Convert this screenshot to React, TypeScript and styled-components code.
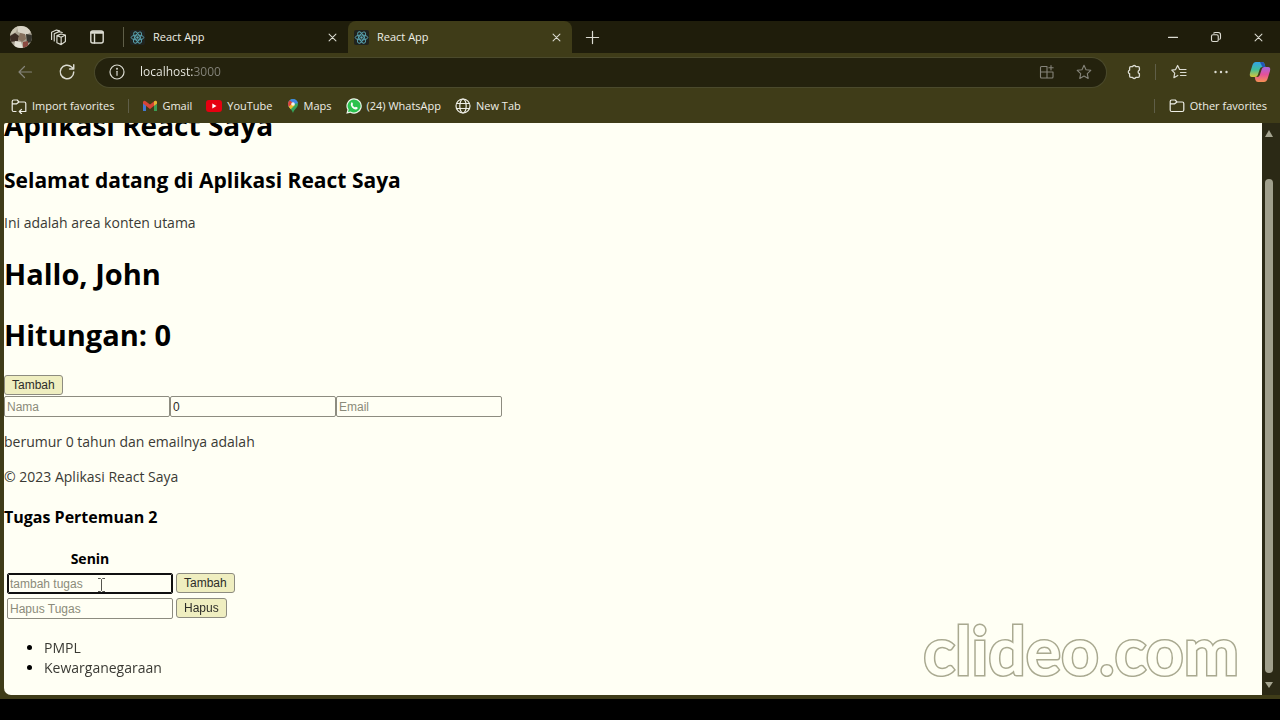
import React from "react";
import styled, { createGlobalStyle } from "styled-components";

const ui = '"Open Sans", "Noto Sans", sans-serif';

const color = {
  titleBar: "#1f1d0b",
  toolBar: "#3f3c18",
  field: "#24220d",
  chromeText: "#eeeee6",
  muted: "#85847a",
  page: "#fffff4",
  text: "#3a3a34",
  border: "#8d8c80",
};

const Global = createGlobalStyle`
  *, *::before, *::after { box-sizing: border-box; }
  body { margin: 0; background: #000; font-family: ${ui}; }
  button, input { font: inherit; margin: 0; }
`;

const Screen = styled.div`
  min-height: 100vh;
  display: flex;
  flex-direction: column;
  padding: 21px 0;
  background: #000;
`;

const Browser = styled.div`
  flex: 1;
  display: flex;
  flex-direction: column;
  background: ${color.toolBar};
  color: ${color.chromeText};
  font-size: 11px;
  line-height: 16px;
`;

const TitleBar = styled.div`
  display: flex;
  height: 32px;
  background: ${color.titleBar};
`;

const IconButton = styled.button<{ $w?: number; $dim?: boolean }>`
  width: ${(p) => p.$w ?? 40}px;
  flex: none;
  align-self: stretch;
  display: flex;
  align-items: center;
  justify-content: center;
  padding: 0;
  border: 0;
  background: none;
  color: ${(p) => (p.$dim ? color.muted : "#dcdcd2")};
`;

const WindowTools = styled.div`
  display: flex;
  padding-right: 4px;
`;

const Tab = styled.div<{ $active?: boolean }>`
  width: 224px;
  display: flex;
  align-items: center;
  padding: 0 3px 0 6px;
  border-radius: 8px 8px 0 0;
  background: ${(p) => (p.$active ? color.toolBar : "transparent")};
`;

const TabLink = styled.button`
  flex: 1;
  display: flex;
  align-items: center;
  gap: 8px;
  padding: 0;
  border: 0;
  background: none;
  color: inherit;
  text-align: left;
`;

const Divider = styled.span<{ $h: number }>`
  width: 1px;
  height: ${(p) => p.$h}px;
  flex: none;
  align-self: center;
  background: #5f5e48;
`;

const Spacer = styled.div`
  flex: 1;
`;

const ToolBar = styled.div`
  display: flex;
  height: 38px;
  padding-left: 4px;
`;

const AddressBar = styled.form`
  flex: 1;
  display: flex;
  align-items: center;
  height: 29px;
  align-self: center;
  margin: 0 6px 0 7px;
  padding: 0 4px 0 3px;
  border-radius: 15px;
  background: ${color.field};
  box-shadow: 0 0 0 1px #4b4a2c;
`;

const Address = styled.input`
  flex: 1;
  min-width: 0;
  padding: 0 0 0 5px;
  border: 0;
  outline: 0;
  font-size: 12px;
  background: linear-gradient(90deg, #f2f2ea 59px, ${color.muted} 59px);
  background-clip: text;
  -webkit-background-clip: text;
  -webkit-text-fill-color: transparent;
`;

const Bookmarks = styled.nav`
  display: flex;
  align-items: center;
  height: 31px;
  padding: 0 13px 2px 11px;
  gap: 14px;
`;

const Bookmark = styled.a`
  display: flex;
  align-items: center;
  gap: 5px;
  color: inherit;
  text-decoration: none;
  white-space: nowrap;
`;

const Viewport = styled.div`
  flex: 1;
  display: flex;
  padding: 1px 0 4px 4px;
  overflow: hidden;
`;

const Page = styled.main`
  flex: 1;
  position: relative;
  overflow: hidden;
  background: ${color.page};
  color: ${color.text};
  border-radius: 2px 0 0 7px;
  font-size: 14px;
  line-height: 20px;
`;

const ScrollBar = styled.div`
  width: 18px;
  display: flex;
  flex-direction: column;
  align-items: center;
  padding-right: 4px;
  background: #2b2915;
`;

const ScrollThumb = styled.div`
  flex: 1;
  width: 8px;
  margin: 38px 0 4px;
  border-radius: 4px;
  background: #a09f8c;
`;

const H1 = styled.h1`
  margin: 21px 0 0;
  font-size: 29px;
  line-height: 40px;
  color: #000;
`;

const SiteTitle = styled(H1)`
  margin-top: -18px;
  font-size: 28px;
`;

const H2 = styled.h2`
  margin: 20px 0 0;
  font-size: 21px;
  line-height: 30px;
  color: #000;
`;

const H3 = styled.h3`
  margin: 19px 0 17px;
  font-size: 16px;
  line-height: 22px;
  color: #000;
`;

const P = styled.p`
  margin: 15px 0 0;
`;

const Intro = styled(P)`
  margin-top: 18px;
`;

const Counter = styled.div`
  display: flex;
  margin-top: 20px;
`;

const FieldRow = styled.div`
  display: flex;
  margin-top: 1px;
`;

const PushButton = styled.button`
  display: block;
  height: 20px;
  padding: 0 7px;
  border: 1px solid ${color.border};
  border-radius: 3px;
  background: #efeec0;
  color: #2c2c28;
  font: 12px/16px "Liberation Sans", Arial, sans-serif;
`;

const Field = styled.input`
  display: block;
  width: 166px;
  height: 21px;
  padding: 0 2px;
  border: 1px solid ${color.border};
  border-radius: 2px;
  background: ${color.page};
  color: #2c2c28;
  font: 12px/16px "Liberation Sans", Arial, sans-serif;
  &::placeholder { color: #8b8b7a; opacity: 1; }
  &:focus { outline: 1px solid #101010; border-color: #101010; outline-offset: -2px; }
`;

const TaskTable = styled.table`
  border-spacing: 3px 4px;
  margin-bottom: 15px;
  th, td { padding: 0; vertical-align: top; }
  th { height: 20px; color: #000; }
`;

const TaskList = styled.ul`
  margin: 0 0 17px;
  padding-left: 40px;
  li::marker { color: #000; }
`;

const Pointer = styled.svg`
  position: absolute;
  left: 93px;
  top: 454px;
`;

const Watermark = styled.div`
  position: absolute;
  right: 23px;
  bottom: 8px;
  font: 700 66px/74px Lato, sans-serif;
  color: ${color.page};
  -webkit-text-stroke: 3px #a9a990;
  paint-order: stroke fill;
`;

const Line = ({ size = 16, w = 1.2, children }: { size?: number; w?: number; children: React.ReactNode }) => (
  <svg width={size} height={size} viewBox="0 0 16 16" fill="none" stroke="currentColor" strokeWidth={w} strokeLinecap="round" strokeLinejoin="round" aria-hidden="true">
    {children}
  </svg>
);

const ReactLogo = () => (
  <svg width="15" height="15" viewBox="0 0 15 15" aria-hidden="true">
    <rect width="15" height="15" rx="2" fill="#20231f" />
    <g fill="none" stroke="#5ba7b5" strokeWidth="0.9">
      <ellipse cx="7.5" cy="7.5" rx="6.3" ry="2.5" />
      <ellipse cx="7.5" cy="7.5" rx="6.3" ry="2.5" transform="rotate(60 7.5 7.5)" />
      <ellipse cx="7.5" cy="7.5" rx="6.3" ry="2.5" transform="rotate(120 7.5 7.5)" />
    </g>
    <circle cx="7.5" cy="7.5" r="1.2" fill="#5ba7b5" />
  </svg>
);

const Avatar = () => (
  <svg width="22" height="22" viewBox="0 0 22 22" aria-hidden="true">
    <defs><clipPath id="face"><circle cx="11" cy="11" r="11" /></clipPath></defs>
    <g clipPath="url(#face)">
      <rect width="22" height="22" fill="#a9a292" />
      <path d="M0 0h8l-2 6-6 3z" fill="#c9c4b2" />
      <path d="M7 0h11l3 6-5 3-8-3z" fill="#d8d3c5" />
      <path d="M0 10l5-3 4 3-1 5-8 1z" fill="#3b2c24" />
      <path d="M10 7l5 1 1 5-4 3-4-3z" fill="#85705d" />
      <path d="M16 8l6 1v7l-5 1z" fill="#37362e" />
      <path d="M5 15l6 1 2 6H4z" fill="#e2dfd4" />
      <path d="M13 16l5-1v5l-5 2z" fill="#8a4940" />
    </g>
  </svg>
);

const Workspaces = () => (
  <Line size={17} w={1.1}>
    <path d="M6.500 6.200l4-1.500 4 1v6l-4 3-4-1.700zM6.500 6.200l4 1.500 4-2M10.500 7.700v7" />
    <path d="M4 11.300V4.500l4.500-2 3 .8M1.500 9.800V3l4.500-2 3 .8" />
  </Line>
);

const TabActions = () => (
  <Line w={1.4}>
    <rect x="1.8" y="2" width="12.4" height="12" rx="2" />
    <path d="M2.500 3.500h11" strokeWidth="2.400" />
    <path d="M5.500 5v9" />
  </Line>
);

const Close = () => <Line size={11} w={1.5}><path d="M3 3l10 10M13 3L3 13" /></Line>;
const Plus = () => <Line size={15} w={1.3}><path d="M8 1.5v13M1.5 8h13" /></Line>;
const Minimize = () => <Line size={12} w={1.5}><path d="M2 8.5h12" /></Line>;
const Restore = () => (
  <Line size={12} w={1.5}>
    <rect x="2" y="5" width="9" height="9" rx="2" />
    <path d="M5 2.8Q5.500 2 7 2h4q3 0 3 3v4q0 1.500-1 2" />
  </Line>
);
const Back = () => <Line><path d="M14.500 8H2M7.500 2.500L2 8l5.500 5.500" /></Line>;
const Refresh = () => <Line size={18} w={1.3}><path d="M14 8a6 6 0 1 1-1.900-4.400L14 5.300M14 1.600v3.700h-3.700" /></Line>;
const Info = () => (
  <Line w={1.200}>
    <circle cx="8" cy="8" r="7" />
    <path d="M8 7.300v4" />
    <circle cx="8" cy="4.800" r="0.400" fill="currentColor" />
  </Line>
);
const AppInstall = () => (
  <Line w={1.100}>
    <path d="M8 2.500H2.500q-1 0-1 1v9.500q0 1 1 1H13q1 0 1-1V8H1.500M8 2.500V14M12 1.500v4.500M9.800 3.700h4.400" />
  </Line>
);
const starPath = "M8 1.300l2 4.400 4.800.6-3.500 3.300.9 4.800L8 12.100l-4.200 2.300.9-4.800L1.200 6.300 6 5.700z";
const Star = () => <Line w={1.100}><path d={starPath} /></Line>;
const Puzzle = () => (
  <Line w={1.300}>
    <path d="M4.800 2.700h1.700a1.800 1.800 0 0 1 3.400 0h2.300q1.200 0 1.200 1.200v2.200a1.900 1.900 0 0 0 0 3.600v2.400q0 1.200-1.200 1.200H9.900a1.800 1.800 0 0 1-3.400 0H4.800q-1.200 0-1.200-1.200V9.700a1.900 1.900 0 0 1 0-3.600V3.900q0-1.200 1.200-1.200z" />
  </Line>
);
const Favorites = () => (
  <Line w={1.200}>
    <path d="M8.500 5.300L6.600 1.500 4.600 5.600.8 6.200l2.900 2.900-.8 4.600 3.900-2.200M8.500 5.500H15M9.500 8.500H15M9.500 11.500H15" />
  </Line>
);
const Dots = () => (
  <Line><g fill="currentColor" stroke="none"><circle cx="2.500" cy="8" r="1.200" /><circle cx="8" cy="8" r="1.200" /><circle cx="13.500" cy="8" r="1.200" /></g></Line>
);

const Copilot = () => (
  <svg width="22" height="22" viewBox="0 0 22 22" aria-hidden="true">
    <defs>
      <linearGradient id="coolSide" x1="0" y1="0" x2="0" y2="1">
        <stop offset="0" stopColor="#31a3e8" /><stop offset="0.500" stopColor="#41bd9a" /><stop offset="1" stopColor="#d6c63a" />
      </linearGradient>
      <linearGradient id="warmSide" x1="0" y1="0" x2="0" y2="1">
        <stop offset="0" stopColor="#a766dd" /><stop offset="0.500" stopColor="#e4509a" /><stop offset="1" stopColor="#f79153" />
      </linearGradient>
    </defs>
    <path d="M7 1h6q2 0 2.600 2l.8 3h-3q-2 0-2.600 2l-2 6q-.6 2-2.600 2H3q-3 0-2-4l2.500-8Q4.500 1 7 1z" fill="url(#coolSide)" />
    <path d="M11 1h2q2 0 2.600 2l.8 3h-3z" fill="#2456b5" />
    <path d="M15 21H9q-2 0-2.600-2l-.6-3h2.400q2 0 2.600-2l2-6q.6-2 2.600-2H19q3 0 2 4l-2.500 8q-1 3-3.500 3z" fill="url(#warmSide)" />
  </svg>
);

const folder = "M1.200 12V3.500q0-1.500 1.500-1.500h3.500L8 4h5.300q1.500 0 1.500 1.500V12q0 1.500-1.500 1.500H2.700Q1.200 13.500 1.200 12zM1.500 5.800h4.200L8 4";
const Folder = () => <Line><path d={folder} /></Line>;
const ImportIcon = () => (
  <Line>
    <path d="M5 13.500H2.700q-1.500 0-1.500-1.500V3.500Q1.200 2 2.700 2h3.500L8 4h5.300q1.500 0 1.500 1.500V11M1.500 5.800h4.200L8 4M14.800 11v2.500H8.500M10.500 11.300l-2.200 2.200 2.200 2.200" />
  </Line>
);
const Gmail = () => (
  <svg width="14" height="12" viewBox="0 0 14 12" aria-hidden="true">
    <path d="M0 2v9h3V5z" fill="#4378d0" /><path d="M14 2v9h-3V5z" fill="#3c9b53" />
    <path d="M0 2q1-2 3-.5l4 3 4-3Q13 0 14 2v1.500L7 9 0 3.500z" fill="#d94436" />
    <path d="M11 1.500Q13 0 14 2v1.500l-3 2.300z" fill="#e2b733" />
  </svg>
);
const YouTube = () => (
  <svg width="16" height="12" viewBox="0 0 16 12" aria-hidden="true">
    <rect width="16" height="12" rx="3" fill="#e60010" /><path d="M6.300 3.500v5l4.200-2.500z" fill="#fff" />
  </svg>
);
const Maps = () => (
  <svg width="12" height="16" viewBox="0 0 12 16" aria-hidden="true">
    <defs><clipPath id="pin"><path d="M6 1a5 5 0 0 1 5 5c0 4-4 5-5 9-1-4-5-5-5-9a5 5 0 0 1 5-5z" /></clipPath></defs>
    <g clipPath="url(#pin)">
      <rect width="12" height="16" fill="#36a35a" />
      <path d="M0 0h12v5L6 6 0 12z" fill="#4285e4" />
      <path d="M0 0l6 5-5 6z" fill="#dc4437" />
      <path d="M0 10l6-5 2 2-6 6z" fill="#eebc2e" />
    </g>
    <circle cx="6" cy="6" r="1.800" fill="#f3f3ee" />
  </svg>
);
const WhatsApp = () => (
  <svg width="16" height="16" viewBox="0 0 16 16" aria-hidden="true">
    <path d="M8 .3a7.700 7.700 0 1 1-3.700 14.400L.3 15.700l1.100-3.900A7.700 7.700 0 0 1 8 .3z" fill="#eef5ec" />
    <path d="M8 1.500a6.500 6.500 0 1 1-3.400 12L2 14.100l.7-2.500A6.500 6.500 0 0 1 8 1.500z" fill="#2bc24e" />
    <path d="M5.300 4.500q.7-.5 1.200.3l.5 1.200q.1.400-.6 1.100.9 1.700 2.600 2.500l.8-.9 1.800.9q.4 1.800-1.600 2Q8 11.800 6 9.500 3.800 7 5.300 4.500z" fill="#fff" />
  </svg>
);
const Globe = () => (
  <Line w={1.200}>
    <circle cx="8" cy="8" r="7" /><ellipse cx="8" cy="8" rx="3.200" ry="7" /><path d="M1.700 5.500h12.600M1.700 10.500h12.600" />
  </Line>
);

const Arrow = ({ down }: { down?: boolean }) => (
  <svg width="8" height="18" viewBox="0 0 8 18" aria-hidden="true">
    <path d={down ? "M0 5h8l-4 6z" : "M0 14h8L4 7z"} fill="#a5a490" />
  </svg>
);

const tabs = [{ title: "React App", active: false }, { title: "React App", active: true }];
const bookmarks = [
  { label: "Gmail", icon: <Gmail /> },
  { label: "YouTube", icon: <YouTube /> },
  { label: "Maps", icon: <Maps /> },
  { label: "(24) WhatsApp", icon: <WhatsApp /> },
  { label: "New Tab", icon: <Globe /> },
];
const tasks = ["PMPL", "Kewarganegaraan"];

export default function App() {
  return (
    <Screen>
      <Global />
      <Browser>
        <TitleBar>
          <WindowTools>
            <IconButton $w={41} aria-label="Profile"><Avatar /></IconButton>
            <IconButton $w={34} aria-label="Workspaces"><Workspaces /></IconButton>
            <IconButton $w={44} aria-label="Tab actions"><TabActions /></IconButton>
          </WindowTools>
          <Divider $h={20} />
          {tabs.map((t, i) => (
            <Tab key={i} $active={t.active}>
              <TabLink><ReactLogo />{t.title}</TabLink>
              <IconButton $w={26} aria-label="Close tab"><Close /></IconButton>
            </Tab>
          ))}
          <IconButton aria-label="New tab"><Plus /></IconButton>
          <Spacer />
          <IconButton $w={43} aria-label="Minimize"><Minimize /></IconButton>
          <IconButton $w={43} aria-label="Restore"><Restore /></IconButton>
          <IconButton $w={43} aria-label="Close"><Close /></IconButton>
        </TitleBar>
        <ToolBar>
          <IconButton $w={42} $dim aria-label="Back"><Back /></IconButton>
          <IconButton $w={42} aria-label="Refresh"><Refresh /></IconButton>
          <AddressBar>
            <IconButton $w={37} type="button" aria-label="Site information"><Info /></IconButton>
            <Address aria-label="Address" defaultValue="localhost:3000" />
            <IconButton $w={37} $dim type="button" aria-label="Install app"><AppInstall /></IconButton>
            <IconButton $w={37} $dim type="button" aria-label="Add to favorites"><Star /></IconButton>
          </AddressBar>
          <IconButton $w={43} aria-label="Extensions"><Puzzle /></IconButton>
          <Divider $h={16} />
          <IconButton $w={46} aria-label="Favorites"><Favorites /></IconButton>
          <IconButton $w={38} aria-label="Settings"><Dots /></IconButton>
          <IconButton aria-label="Copilot"><Copilot /></IconButton>
        </ToolBar>
        <Bookmarks>
          <Bookmark href="#"><ImportIcon />Import favorites</Bookmark>
          <Divider $h={14} />
          {bookmarks.map((b) => (
            <Bookmark key={b.label} href="#">{b.icon}{b.label}</Bookmark>
          ))}
          <Spacer />
          <Divider $h={14} />
          <Bookmark href="#"><Folder />Other favorites</Bookmark>
        </Bookmarks>
        <Viewport>
          <Page>
            <SiteTitle>Aplikasi React Saya</SiteTitle>
            <H2>Selamat datang di Aplikasi React Saya</H2>
            <Intro>Ini adalah area konten utama</Intro>
            <H1>Hallo, John</H1>
            <H1>Hitungan: 0</H1>
            <Counter><PushButton>Tambah</PushButton></Counter>
            <FieldRow>
              <Field placeholder="Nama" aria-label="Nama" />
              <Field defaultValue="0" aria-label="Umur" />
              <Field placeholder="Email" aria-label="Email" />
            </FieldRow>
            <P>berumur 0 tahun dan emailnya adalah</P>
            <P>© 2023 Aplikasi React Saya</P>
            <H3>Tugas Pertemuan 2</H3>
            <TaskTable>
              <thead><tr><th scope="col">Senin</th></tr></thead>
              <tbody>
                <tr>
                  <td><Field autoFocus placeholder="tambah tugas" aria-label="Tambah tugas" /></td>
                  <td><PushButton>Tambah</PushButton></td>
                </tr>
                <tr>
                  <td><Field placeholder="Hapus Tugas" aria-label="Hapus tugas" /></td>
                  <td><PushButton>Hapus</PushButton></td>
                </tr>
              </tbody>
            </TaskTable>
            <TaskList>{tasks.map((t) => <li key={t}>{t}</li>)}</TaskList>
            <Pointer width="9" height="16" viewBox="0 0 9 16" fill="none" stroke="#55554e" aria-hidden="true">
              <path d="M1 1.500h2.500l1 1 1-1H8M4.500 2.500v11M1 14.500h2.500l1-1 1 1H8" />
            </Pointer>
            <Watermark>clideo.com</Watermark>
          </Page>
          <ScrollBar><Arrow /><ScrollThumb /><Arrow down /></ScrollBar>
        </Viewport>
      </Browser>
    </Screen>
  );
}
